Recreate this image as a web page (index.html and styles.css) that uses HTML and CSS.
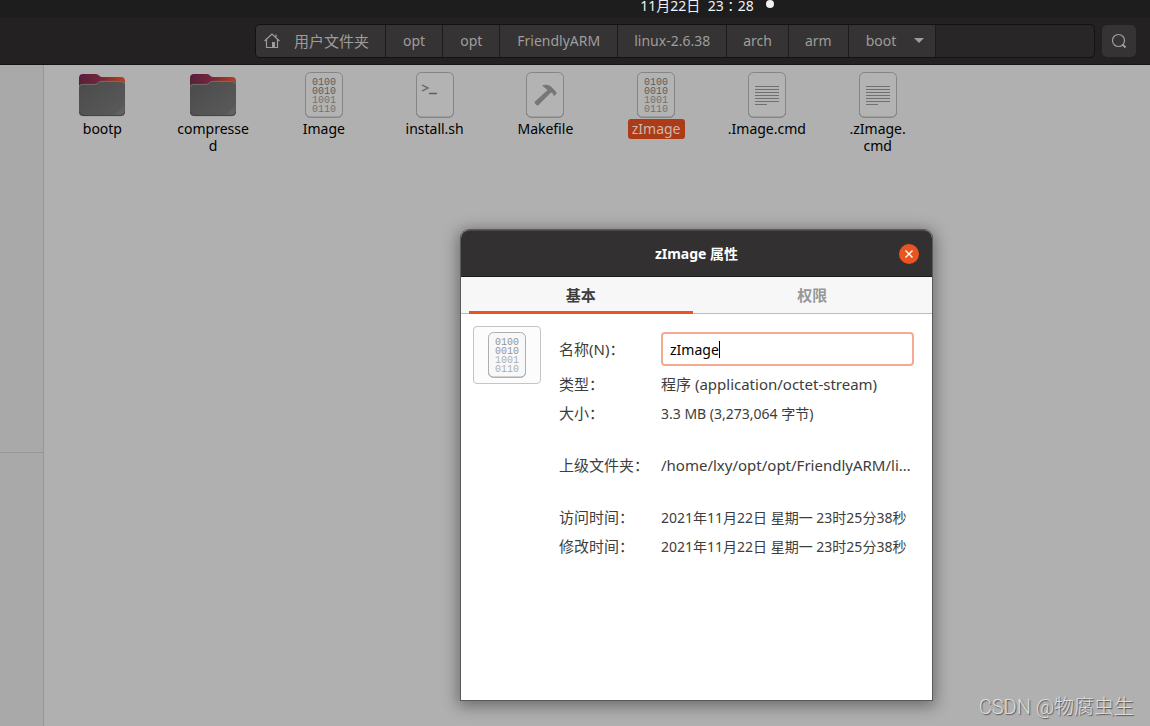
FILE: index.html
```html
<!DOCTYPE html>
<html lang="zh-CN">
<head>
<meta charset="utf-8">
<title>boot</title>
<link rel="stylesheet" href="styles.css">
</head>
<body>
<svg class="defs" aria-hidden="true">
  <defs>
    <linearGradient id="flap" x1="0" x2="1" y1="0" y2="0">
      <stop offset="0" stop-color="#561f3c"/><stop offset=".45" stop-color="#74263a"/><stop offset="1" stop-color="#b8421b"/>
    </linearGradient>
    <linearGradient id="front" x1="0" x2="1" y1="0" y2="1">
      <stop offset="0" stop-color="#4a4a4a"/><stop offset="1" stop-color="#5b5b5b"/>
    </linearGradient>
    <symbol id="folder" viewBox="0 0 48 48">
      <path fill="url(#flap)" d="M1 7a4 4 0 0 1 4-4h13c3 0 3 3 6 3h19a4 4 0 0 1 4 4v12H1z"/>
      <path fill="url(#front)" d="M1 16a3 3 0 0 1 3-3h13c3 0 3-3 6-3h21a3 3 0 0 1 3 3v28a4 4 0 0 1-4 4H5a4 4 0 0 1-4-4z"/>
      <path fill="none" stroke="#7b7876" stroke-width=".8" d="M1.400 16a3 3 0 0 1 3-2.600h13c3 0 3-3 6-3h20a3 3 0 0 1 3 2.600"/>
      <path fill="none" stroke="#3c3c3c" stroke-width=".8" d="M1.500 41a4 4 0 0 0 4 3.600h37a4 4 0 0 0 4-3.600"/>
      <path fill="#656565" d="M46 35v7a3 3 0 0 1-3 2h-7z" opacity=".6"/>
    </symbol>
    <symbol id="sheet" viewBox="0 0 48 48">
      <rect class="sheet-edge" x="5.500" y="1.500" width="37" height="45" rx="5" fill="currentColor"/>
      <path class="sheet-edge" d="M5.500 41.500a5 5 0 0 0 5 4.500h27a5 5 0 0 0 5-4.500" fill="none"/>
    </symbol>
  </defs>
</svg>

<header class="topbar"><time>11月22日&nbsp; 23∶28</time><span class="dot"></span></header>

<nav class="toolbar">
  <div class="path">
    <button class="crumb home" type="button">
      <svg width="16" height="16" viewBox="0 0 16 16" fill="none" stroke="currentColor" stroke-width="1.200"><path d="M.5 8 8 1l7.500 7M2.500 6.500v8h11v-8M12 4V1.500"/><path d="M8 9h3v5H8z" fill="currentColor" stroke="none"/></svg>
      <span>用户文件夹</span>
    </button>
    <button class="crumb" type="button">opt</button>
    <button class="crumb" type="button">opt</button>
    <button class="crumb" type="button">FriendlyARM</button>
    <button class="crumb snug" type="button">linux-2.6.38</button>
    <button class="crumb snug" type="button">arch</button>
    <button class="crumb snug" type="button">arm</button>
    <button class="crumb current" type="button">boot
      <svg width="10" height="5" viewBox="0 0 10 5"><path fill="currentColor" d="M0 0h10L5 5z"/></svg>
    </button>
  </div>
  <button class="search" type="button" aria-label="搜索">
    <svg width="16" height="16" viewBox="0 0 16 16" fill="none" stroke="currentColor" stroke-width="1.200"><circle cx="7.500" cy="7.500" r="6"/><path d="m11.500 11.500 3 3" stroke-width="2"/></svg>
  </button>
</nav>

<div class="body">
  <aside class="sidebar"><div class="places"></div></aside>
  <main class="files">
    <figure class="file"><svg class="icon"><use href="#folder"/></svg><figcaption>bootp</figcaption></figure>
    <figure class="file"><svg class="icon"><use href="#folder"/></svg><figcaption>compresse<wbr>d</figcaption></figure>
    <figure class="file">
      <svg class="icon" viewBox="0 0 48 48"><use href="#sheet"/><g class="bits"><text x="12" y="14">0100</text><text x="12" y="23">0010</text><text x="12" y="32" opacity=".75">1001</text><text x="12" y="41" opacity=".75">0110</text></g></svg>
      <figcaption>Image</figcaption>
    </figure>
    <figure class="file">
      <svg class="icon" viewBox="0 0 48 48"><use href="#sheet"/><path d="m11 14 6 3-6 3M18 22.500h8" fill="none" stroke="#5e5e5e" stroke-width="1.300"/></svg>
      <figcaption>install.sh</figcaption>
    </figure>
    <figure class="file">
      <svg class="icon" viewBox="0 0 48 48"><use href="#sheet"/><path fill="#777" d="m13.500 31 13-12-5.500-4.500c4-1.500 7-.5 9.500 1.500l4 4 .5 2 .5-1 .5 1-3 3-1-1 .5-1-2.500-1.500L17 34.500c-1.500 0-3.500-2-3.500-3.500z"/></svg>
      <figcaption>Makefile</figcaption>
    </figure>
    <figure class="file selected">
      <svg class="icon" viewBox="0 0 48 48"><use href="#sheet"/><g class="bits"><text x="12" y="14">0100</text><text x="12" y="23">0010</text><text x="12" y="32" opacity=".75">1001</text><text x="12" y="41" opacity=".75">0110</text></g></svg>
      <figcaption>zImage</figcaption>
    </figure>
    <figure class="file">
      <svg class="icon" viewBox="0 0 48 48"><use href="#sheet"/><path d="M12 15.500h24M12 18.500h24M12 21.500h24M12 24.500h24M12 27.500h24M12 30.500h24M12 33.500h12" stroke="#707070"/></svg>
      <figcaption>.Image.cmd</figcaption>
    </figure>
    <figure class="file">
      <svg class="icon" viewBox="0 0 48 48"><use href="#sheet"/><path d="M12 15.500h24M12 18.500h24M12 21.500h24M12 24.500h24M12 27.500h24M12 30.500h24M12 33.500h12" stroke="#707070"/></svg>
      <figcaption>.zImage.<wbr>cmd</figcaption>
    </figure>
  </main>
</div>

<section class="dialog" role="dialog" aria-labelledby="title">
  <header class="titlebar">
    <h1 id="title">zImage 属性</h1>
    <button class="close" type="button" aria-label="关闭"><svg width="8" height="8" viewBox="0 0 8 8"><path d="m.5.5 7 7m0-7-7 7" stroke="#fff" stroke-width="1.400"/></svg></button>
  </header>
  <div class="tabs" role="tablist">
    <button class="tab active" type="button" role="tab" aria-selected="true">基本</button>
    <button class="tab" type="button" role="tab" aria-selected="false">权限</button>
  </div>
  <div class="panel">
    <button class="preview" type="button" aria-label="图标">
      <svg class="icon light" viewBox="0 0 48 48"><use href="#sheet"/><g class="bits"><text x="12" y="14">0100</text><text x="12" y="23">0010</text><text x="12" y="32" opacity=".75">1001</text><text x="12" y="41" opacity=".75">0110</text></g></svg>
    </button>
    <div class="props">
      <div class="row name">
        <label for="name">名称(N)：</label>
        <div class="field"><input id="name" type="text" value="zImage"><span class="caret"></span></div>
      </div>
      <dl>
        <div class="row"><dt>类型：</dt><dd class="large">程序 (application/octet-stream)</dd></div>
        <div class="row"><dt>大小：</dt><dd>3.3 MB (3,273,064 字节)</dd></div>
      </dl>
      <dl>
        <div class="row"><dt>上级文件夹：</dt><dd class="large">/home/lxy/opt/opt/FriendlyARM/li…</dd></div>
      </dl>
      <dl>
        <div class="row"><dt>访问时间：</dt><dd>2021年11月22日 星期一 23时25分38秒</dd></div>
        <div class="row"><dt>修改时间：</dt><dd>2021年11月22日 星期一 23时25分38秒</dd></div>
      </dl>
    </div>
  </div>
</section>

<div class="watermark">CSDN @物腐虫生</div>
</body>
</html>
```

FILE: styles.css
```css
* { box-sizing: border-box; }

body {
  margin: 0;
  min-height: 100vh;
  display: flex;
  flex-direction: column;
  position: relative;
  overflow: hidden;
  background: #b0b0b0;
  color: #000;
  font: 14px/17px "Noto Sans", "Noto Sans CJK SC", sans-serif;
}

button, input { font: inherit; color: inherit; border: 0; padding: 0; margin: 0; }
figure, dl, dd, h1 { margin: 0; }
.defs { position: absolute; width: 0; height: 0; }

.topbar {
  height: 18px;
  display: flex;
  justify-content: center;
  gap: 12px;
  padding-left: 264px;
  background: #1d1d1d;
  color: #f2f2f2;
  line-height: 12px;
}
.dot { width: 8px; height: 8px; border-radius: 50%; background: #f2f2f2; }

.toolbar {
  height: 47px;
  display: flex;
  align-items: center;
  gap: 7px;
  padding: 0 14px 0 255px;
  background: #232122;
  border-bottom: 1px solid #151314;
  color: #9f9d9b;
}
.path {
  flex: 1;
  display: flex;
  height: 34px;
  border: 1px solid #131112;
  border-radius: 5px;
  background: #282627;
  overflow: hidden;
}
.crumb {
  display: flex;
  align-items: center;
  padding: 0 17px 2px;
  background: #353334;
  border-right: 1px solid #1d1b1c;
}
.snug { padding: 0 16px 2px; }
.home { gap: 14px; padding: 0 16px 0 8px; font-size: 15px; }
.current { gap: 18px; padding-right: 11px; }
.search {
  width: 34px;
  height: 32px;
  display: grid;
  place-items: center;
  border-radius: 5px;
  background: #353334;
}

.body { flex: 1; display: flex; }
.sidebar { width: 44px; background: #a9a9a9; border-right: 1px solid #979797; }
.places { height: 388px; border-bottom: 1px solid #979797; }
.files {
  flex: 1;
  max-width: 889px;
  padding: 6px 0 0 3px;
  display: grid;
  grid-template-columns: repeat(8, 1fr);
  align-content: start;
}
.file { display: flex; flex-direction: column; align-items: center; text-align: center; }
.icon { width: 48px; height: 48px; color: #b3b3b3; }
.sheet-edge { stroke: #858585; }
.file figcaption { max-width: 87px; padding: 1px 4px 2px; border-radius: 3px; }
.selected figcaption { background: #ac3c18; color: #c9b8b0; }
.bits { font: 10px "Liberation Mono", monospace; fill: #5c5c5c; }

.dialog {
  position: absolute;
  left: 461px;
  top: 230px;
  width: 471px;
  min-height: 470px;
  border-radius: 8px 8px 0 0;
  background: #fff;
  color: #3d3d3d;
  box-shadow: 0 0 0 1px #5a5a5a, 0 3px 16px 3px rgba(0, 0, 0, .4);
}
.titlebar {
  height: 47px;
  display: grid;
  grid-template-columns: 1fr auto 1fr;
  align-items: center;
  padding: 0 13px;
  border-radius: 8px 8px 0 0;
  border-top: 1px solid #4b4949;
  border-bottom: 1px solid #1c1a1b;
  background: #323031;
  color: #fff;
}
.titlebar h1 { grid-column: 2; font-size: 14px; line-height: 20px; font-weight: 700; }
.close {
  justify-self: end;
  width: 20px;
  height: 20px;
  display: grid;
  place-items: center;
  border-radius: 50%;
  background: #e95420;
}
.tabs {
  display: flex;
  gap: 8px;
  height: 37px;
  padding: 0 8px;
  background: #f7f7f7;
  border-bottom: 1px solid #bcbcbc;
}
.tab {
  flex: 1;
  height: 37px;
  padding-top: 3px;
  border-bottom: 3px solid transparent;
  background: none;
  color: #979797;
  font-size: 15px;
  font-weight: 700;
}
.tab.active { border-color: #e95420; color: #3d3d3d; }
.panel { display: flex; align-items: flex-start; gap: 18px; padding: 12px 18px 12px 12px; }
.preview {
  width: 68px;
  height: 58px;
  display: grid;
  place-items: center;
  border: 1px solid #c4c4c4;
  border-radius: 4px;
  background: #fcfcfc;
}
.light { color: #f6f6f6; opacity: .65; }
.props { flex: 1; min-width: 0; padding-top: 6px; display: flex; flex-direction: column; gap: 23px; }
.row { display: grid; grid-template-columns: 102px 1fr; align-items: center; height: 29px; white-space: nowrap; }
.row dt, .row label, .large { font-size: 15px; }
.name { height: 34px; margin-bottom: -19px; }
.field { position: relative; }
.field input {
  width: 100%;
  height: 34px;
  padding: 0 7px;
  border: 2px solid #f4aa90;
  border-radius: 4px;
  background: #fff;
  color: #000;
  outline: 0;
}
.caret { position: absolute; left: 58px; top: 9px; width: 1px; height: 17px; background: #000; }

.watermark {
  position: absolute;
  right: 16px;
  bottom: 5px;
  color: #dedede;
  font: 300 20px/28px Roboto, "Noto Sans CJK SC", sans-serif;
  text-shadow: 1px 1px 1px #555;
}
```
